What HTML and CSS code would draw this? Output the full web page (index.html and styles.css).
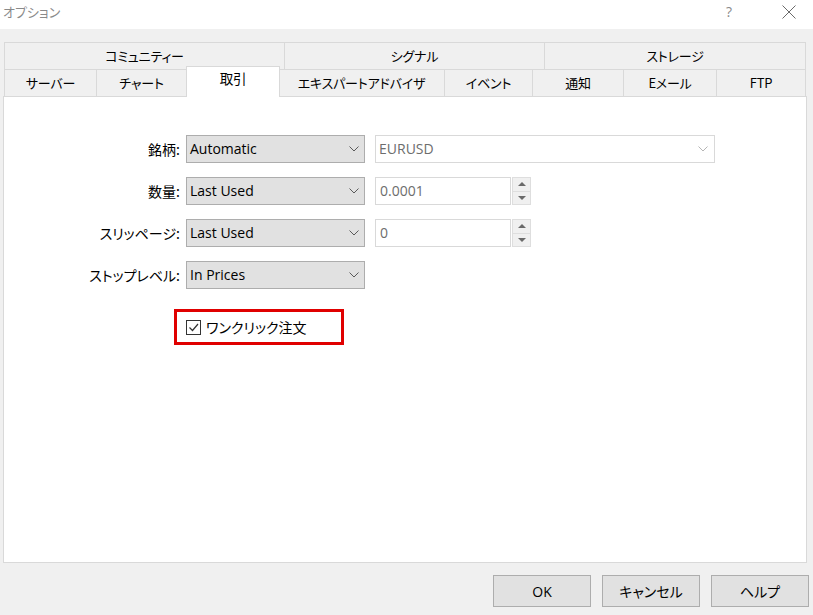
FILE: index.html
```html
<!DOCTYPE html>
<html lang="ja">
<head>
<meta charset="utf-8">
<title>オプション</title>
<link rel="stylesheet" href="styles.css">
</head>
<body>
<div class="window">
  <div class="titlebar">
    <span class="title">オプション</span>
    <span class="help">?</span>
    <span class="close"><svg width="14" height="14" viewBox="0 0 14 14"><path d="M0.5 0.5 L13.5 13.5 M13.5 0.5 L0.5 13.5" stroke="#6a6a6a" stroke-width="1" fill="none"/></svg></span>
  </div>
  <div class="body">
    <div class="tabs">
      <div class="tabrow row1">
        <div class="tab">コミュニティー</div>
        <div class="tab">シグナル</div>
        <div class="tab">ストレージ</div>
      </div>
      <div class="tabrow row2">
        <div class="tab">サーバー</div>
        <div class="tab">チャート</div>
        <div class="tab active">取引</div>
        <div class="tab">エキスパートアドバイザ</div>
        <div class="tab">イベント</div>
        <div class="tab">通知</div>
        <div class="tab">Eメール</div>
        <div class="tab">FTP</div>
      </div>
    </div>
    <div class="panel">
      <div class="form">
        <div class="frow">
          <label class="lbl">銘柄:</label>
          <div class="combo"><span>Automatic</span><svg class="chev" width="10" height="6" viewBox="0 0 10 6"><path d="M0.5 0.5 L5 5 L9.5 0.5" stroke="#5a5a5a" fill="none"/></svg></div>
          <div class="combo disabled wide"><span>EURUSD</span><svg class="chev" width="10" height="6" viewBox="0 0 10 6"><path d="M0.5 0.5 L5 5 L9.5 0.5" stroke="#b5b5b5" fill="none"/></svg></div>
        </div>
        <div class="frow">
          <label class="lbl">数量:</label>
          <div class="combo"><span>Last Used</span><svg class="chev" width="10" height="6" viewBox="0 0 10 6"><path d="M0.5 0.5 L5 5 L9.5 0.5" stroke="#5a5a5a" fill="none"/></svg></div>
          <div class="spin">
            <div class="spinbox">0.0001</div>
            <div class="spinbtns">
              <div class="sb"><svg width="8" height="4" viewBox="0 0 8 4"><path d="M0 4 L4 0 L8 4 Z" fill="#6a6a6a"/></svg></div>
              <div class="sb"><svg width="8" height="4" viewBox="0 0 8 4"><path d="M0 0 L4 4 L8 0 Z" fill="#6a6a6a"/></svg></div>
            </div>
          </div>
        </div>
        <div class="frow">
          <label class="lbl">スリッページ:</label>
          <div class="combo"><span>Last Used</span><svg class="chev" width="10" height="6" viewBox="0 0 10 6"><path d="M0.5 0.5 L5 5 L9.5 0.5" stroke="#5a5a5a" fill="none"/></svg></div>
          <div class="spin">
            <div class="spinbox">0</div>
            <div class="spinbtns">
              <div class="sb"><svg width="8" height="4" viewBox="0 0 8 4"><path d="M0 4 L4 0 L8 4 Z" fill="#6a6a6a"/></svg></div>
              <div class="sb"><svg width="8" height="4" viewBox="0 0 8 4"><path d="M0 0 L4 4 L8 0 Z" fill="#6a6a6a"/></svg></div>
            </div>
          </div>
        </div>
        <div class="frow">
          <label class="lbl">ストップレベル:</label>
          <div class="combo"><span>In Prices</span><svg class="chev" width="10" height="6" viewBox="0 0 10 6"><path d="M0.5 0.5 L5 5 L9.5 0.5" stroke="#5a5a5a" fill="none"/></svg></div>
        </div>
      </div>
      <div class="highlight">
        <span class="check"><svg width="13" height="13" viewBox="0 0 13 13"><path d="M2.5 6.5 L5.5 9.5 L11 3" stroke="#333" stroke-width="1.2" fill="none"/></svg></span>
        <span class="checklbl">ワンクリック注文</span>
      </div>
    </div>
    <div class="buttons">
      <button class="btn">OK</button>
      <button class="btn">キャンセル</button>
      <button class="btn">ヘルプ</button>
    </div>
  </div>
</div>
</body>
</html>
```
FILE: styles.css
```css
html, body {
  margin: 0;
  padding: 0;
}
body {
  width: 813px;
  height: 615px;
  overflow: hidden;
  background: #f0f0f0;
  font-family: "Open Sans", "Noto Sans CJK JP", sans-serif;
  font-feature-settings: "palt";
  font-size: 14px;
  color: #000;
}
.window {
  width: 813px;
  height: 615px;
  display: flex;
  flex-direction: column;
}
.titlebar {
  height: 29px;
  background: #fff;
  display: flex;
  align-items: center;
  flex-shrink: 0;
}
.title {
  margin-left: 3px;
  color: #8a8a8a;
  font-family: "Noto Sans CJK JP", sans-serif;
  font-size: 13px;
  margin-top: -7px;
  flex: 1;
}
.help {
  color: #8a8a8a;
  font-size: 14px;
  margin-top: -6px;
  width: 56px;
}
.close {
  width: 31px;
  display: flex;
  margin-top: -6px;
}
.body {
  flex: 1;
  display: flex;
  flex-direction: column;
}
.tabs {
  margin-top: 13px;
  margin-left: 4px;
  width: 802px;
}
.tabrow {
  display: grid;
  height: 27px;
  box-sizing: border-box;
}
.row1 {
  grid-template-columns: 280px 260px 262px;
}
.row2 {
  grid-template-columns: 92px 90px 93px 165px 88px 91px 93px 90px;
}
.tab {
  border: 1px solid #d9d9d9;
  border-right: none;
  border-bottom: none;
  display: flex;
  align-items: center;
  justify-content: center;
  font-family: "Noto Sans CJK JP", sans-serif;
  font-size: 13px;
  letter-spacing: -0.2px;
  background: #f0f0f0;
  line-height: 1;
  padding-bottom: 1px;
}
.tab:last-child {
  border-right: 1px solid #d9d9d9;
}
.tab.active {
  background: #fff;
  margin-top: -3px;
  margin-bottom: -1px;
  padding-bottom: 6px;
  position: relative;
  z-index: 2;
  border-right: 1px solid #d9d9d9;
  margin-right: -1px;
  font-size: 13.5px;
}
.active + .tab {
  border-left: none;
}
.panel {
  margin-left: 3px;
  width: 804px;
  height: 467px;
  box-sizing: border-box;
  background: #fff;
  border: 1px solid #d9d9d9;
  position: relative;
  z-index: 1;
}
.form {
  margin-top: 38px;
  display: flex;
  flex-direction: column;
  gap: 14px;
}
.frow {
  display: flex;
  align-items: center;
  height: 28px;
}
.lbl {
  width: 176px;
  text-align: right;
  font-family: "Noto Sans CJK JP", sans-serif;
  font-size: 14px;
  margin-right: 6px;
  padding-bottom: 1px;
}
.combo {
  width: 179px;
  height: 28px;
  box-sizing: border-box;
  border: 1px solid #adadad;
  background: #e1e1e1;
  display: flex;
  align-items: center;
  padding: 0 5px 1px 3px;
  justify-content: space-between;
  font-size: 14px;
}
.combo.wide {
  margin-left: 10px;
  width: 340px;
  background: #fff;
  border-color: #d9d9d9;
  color: #6d6d6d;
  padding-right: 6px;
}
.spin {
  margin-left: 10px;
  display: flex;
  align-items: center;
}
.spinbox {
  width: 136px;
  height: 28px;
  box-sizing: border-box;
  border: 1px solid #d9d9d9;
  color: #6d6d6d;
  display: flex;
  align-items: center;
  padding-left: 4px;
  padding-bottom: 1px;
}
.spinbtns {
  margin-left: 1px;
  display: flex;
  flex-direction: column;
  width: 19px;
  height: 28px;
  box-sizing: border-box;
  border: 1px solid #dedede;
  background: #f0f0f0;
}
.sb {
  flex: 1;
  display: flex;
  align-items: center;
  justify-content: center;
}
.sb + .sb {
  border-top: 1px solid #dedede;
}
.highlight {
  margin-top: 20px;
  margin-left: 170px;
  width: 170px;
  height: 36px;
  box-sizing: border-box;
  border: 3px solid #e00000;
  display: flex;
  align-items: center;
  padding-left: 9px;
}
.check {
  width: 13px;
  height: 13px;
  border: 1px solid #333;
  display: flex;
  margin-right: 5px;
}
.checklbl {
  font-family: "Noto Sans CJK JP", sans-serif;
  font-size: 14px;
  padding-bottom: 1px;
}
.buttons {
  margin-top: 12px;
  display: flex;
  justify-content: flex-end;
  gap: 11px;
  padding-right: 4px;
}
.btn {
  width: 98px;
  height: 32px;
  background: #e1e1e1;
  border: 1px solid #adadad;
  font-family: "Open Sans", "Noto Sans CJK JP", sans-serif;
  font-feature-settings: "palt";
  font-size: 14px;
  color: #000;
  padding: 0;
}
```
